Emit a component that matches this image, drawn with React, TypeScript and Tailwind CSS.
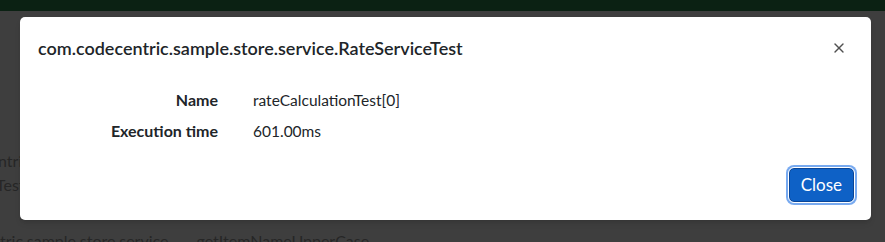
import { X } from 'lucide-react'

const font = { fontFamily: '"Segoe UI", Lato, "Noto Sans", sans-serif' }

export default function App() {
    return (
        <div className="relative w-[885px] h-[242px] overflow-hidden bg-[#3e3e3e]" style={font}>
            {/* page behind the backdrop */}
            <div className="h-[11px] bg-[#0b2113]"></div>
            <div className="text-[16px] text-[#262626] leading-[24px]">
                <div className="mt-[138px] -ml-[2px]">ntric</div>
                <div className="-ml-[4px]">Test</div>
                <div className="mt-[32px] flex gap-[28px]">
                    <span>tric.sample.store.service</span>
                    <span>getItemNameUpperCase</span>
                </div>
            </div>

            {/* modal */}
            <div className="absolute left-[20px] top-[17px] w-[851px] h-[203px] bg-white rounded-[5px] shadow-md flex flex-col">
                <div className="h-[62px] flex items-center justify-between pl-[18px] pr-[24px]">
                    <h5 className="text-[18px] leading-[30px] font-semibold text-[#212529]">
                        com.codecentric.sample.store.service.RateServiceTest
                    </h5>
                    <X size={16} strokeWidth={2} className="text-[#505050]" />
                </div>
                <div className="pt-[9px] grid grid-cols-[198px_1fr] gap-y-[7px] text-[16px] leading-[24px] text-[#212529]">
                    <div className="text-right font-bold">Name</div>
                    <div className="pl-[35px] text-[15.5px]">rateCalculationTest[0]</div>
                    <div className="text-right font-bold">Execution time</div>
                    <div className="pl-[35px] text-[15.5px]">601.00ms</div>
                </div>
                <div className="mt-auto flex justify-end pr-[17px] pb-[18px]">
                    <button className="h-[34px] px-[11px] rounded-[5px] bg-[#0e61c6] border border-[#0a4596] text-white text-[17px] ring-[3px] ring-[#78aaf0] outline outline-1 outline-white">
                        Close
                    </button>
                </div>
            </div>
        </div>
    )
}
